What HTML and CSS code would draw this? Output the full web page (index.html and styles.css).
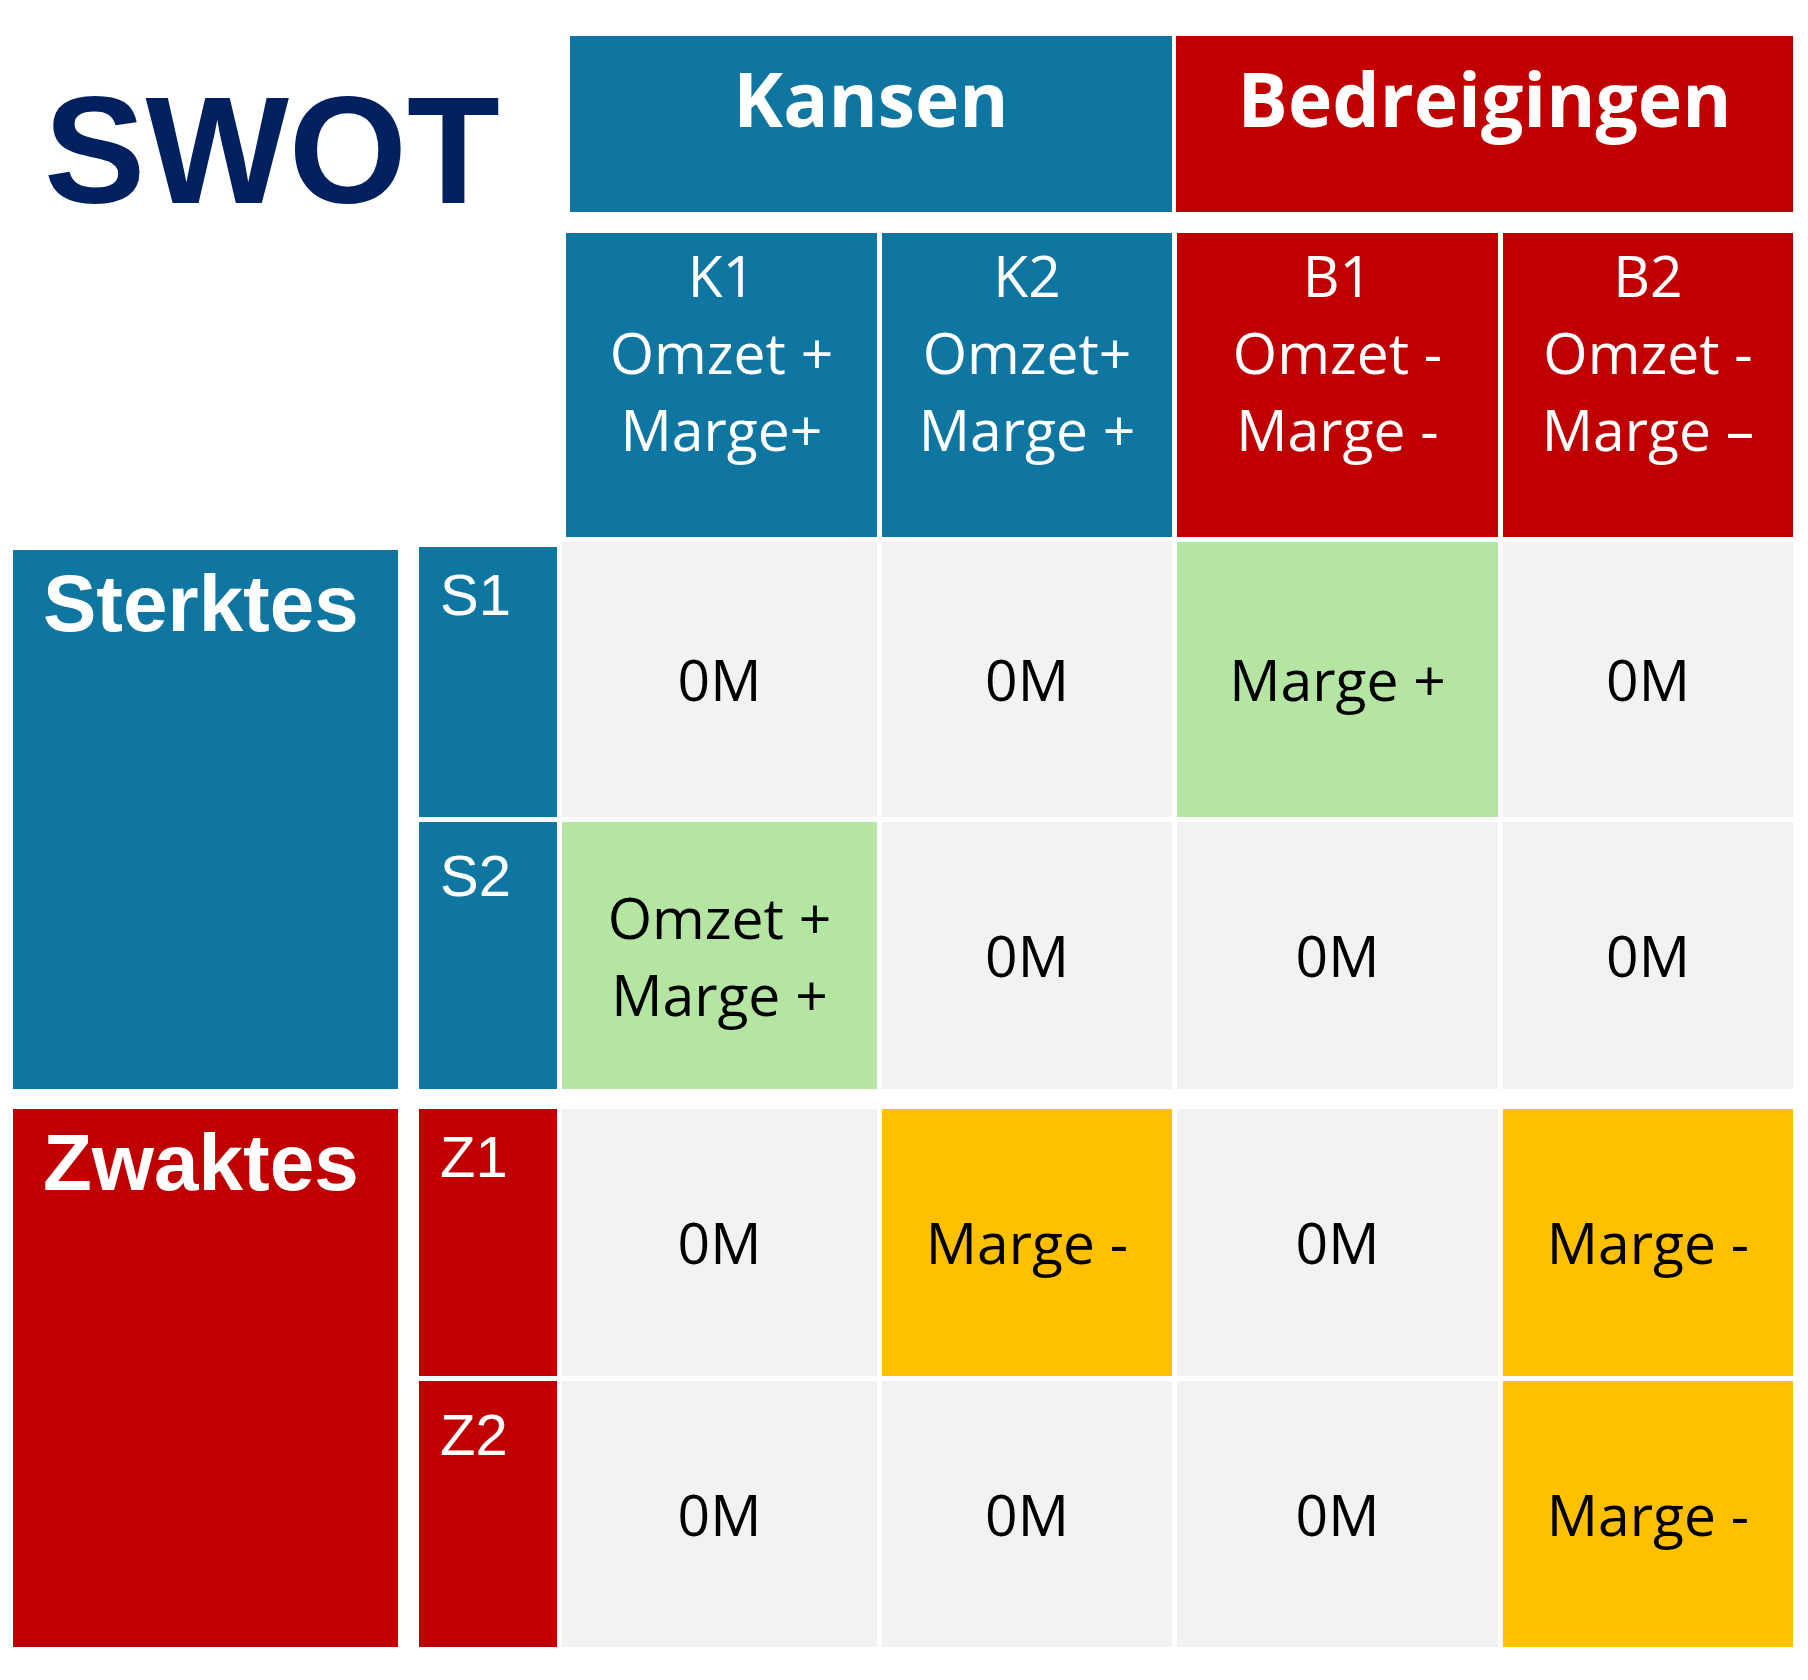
FILE: index.html
```html
<!DOCTYPE html>
<html lang="nl">
<head>
<meta charset="utf-8">
<title>SWOT</title>
<link rel="stylesheet" href="styles.css">
</head>
<body>
<div class="swot">
  <div class="title">SWOT</div>

  <div class="group-head blue head-k">Kansen</div>
  <div class="group-head red head-b">Bedreigingen</div>

  <div class="sub blue sub-k1">K1<br>Omzet +<br>Marge+</div>
  <div class="sub blue sub-k2">K2<br>Omzet+<br>Marge +</div>
  <div class="sub red sub-b1">B1<br>Omzet -<br>Marge -</div>
  <div class="sub red sub-b2">B2<br>Omzet -<br>Marge &ndash;</div>

  <div class="side blue side-s">Sterktes</div>
  <div class="side red side-z">Zwaktes</div>

  <div class="lbl blue lbl-s1">S1</div>
  <div class="lbl blue lbl-s2">S2</div>
  <div class="lbl red lbl-z1">Z1</div>
  <div class="lbl red lbl-z2">Z2</div>

  <div class="cell r-s1 c-k1">0M</div>
  <div class="cell r-s1 c-k2">0M</div>
  <div class="cell green r-s1 c-b1">Marge +</div>
  <div class="cell r-s1 c-b2">0M</div>

  <div class="cell green r-s2 c-k1">Omzet +<br>Marge +</div>
  <div class="cell r-s2 c-k2">0M</div>
  <div class="cell r-s2 c-b1">0M</div>
  <div class="cell r-s2 c-b2">0M</div>

  <div class="cell r-z1 c-k1">0M</div>
  <div class="cell yellow r-z1 c-k2">Marge -</div>
  <div class="cell r-z1 c-b1">0M</div>
  <div class="cell yellow r-z1 c-b2">Marge -</div>

  <div class="cell r-z2 c-k1">0M</div>
  <div class="cell r-z2 c-k2">0M</div>
  <div class="cell r-z2 c-b1">0M</div>
  <div class="cell yellow r-z2 c-b2">Marge -</div>
</div>
</body>
</html>
```

FILE: styles.css
```css
html, body {
  margin: 0;
  padding: 0;
  background: #ffffff;
}

.swot {
  display: grid;
  /* col1 side | gap | label | gap | K1 | gap | K2 | gap | B1 | gap | B2 */
  grid-template-columns: 385px 21px 138px 5px 315px 5px 290px 5px 321px 5px 290px;
  /* head | gap | sub | gap | S1 | gap | S2 | gap | Z1 | gap | Z2 */
  grid-template-rows: 176px 21px 304px 5px 275px 5px 267px 20px 267px 5px 266px;
  padding: 36px 0 0 13px;
  font-family: "Open Sans", "Noto Sans", sans-serif;
}

.blue { background: #0e76a0; color: #ffffff; }
.red { background: #c00000; color: #ffffff; }
.green { background: #b5e5a2; }
.yellow { background: #ffc000; }

.title {
  grid-column: 1 / 4;
  grid-row: 1 / 4;
  font-family: "Liberation Sans", Arial, sans-serif;
  font-weight: 700;
  font-size: 152px;
  line-height: 1;
  color: #002060;
  padding: 38px 0 0 31px;
}

.group-head {
  grid-row: 1;
  font-weight: 700;
  font-size: 75px;
  line-height: 105px;
  text-align: center;
  padding-top: 10px;
}
.head-k { grid-column: 5 / 8; margin-left: 8px; }
.head-b { grid-column: 9 / 12; margin-left: -1px; }

.sub {
  grid-row: 3;
  font-size: 57px;
  line-height: 77px;
  text-align: center;
  padding-top: 4px;
}
.sub-k1 { grid-column: 5; margin-left: 4px; }
.sub-k2 { grid-column: 7; }
.sub-b1 { grid-column: 9; }
.sub-b2 { grid-column: 11; }

.side {
  font-family: "Liberation Sans", Arial, sans-serif;
  font-weight: 700;
  font-size: 80px;
  line-height: 1;
  padding: 14px 0 0 30px;
  grid-column: 1;
}
.side-s { grid-row: 5 / 8; margin-top: 8px; }
.side-z { grid-row: 9 / 12; }

.lbl {
  font-family: "Liberation Sans", Arial, sans-serif;
  font-size: 58px;
  line-height: 1;
  padding: 19px 0 0 21px;
  grid-column: 3;
}
.lbl-s1 { grid-row: 5; margin-top: 5px; }
.lbl-s2 { grid-row: 7; padding-top: 25px; }
.lbl-z1 { grid-row: 9; }
.lbl-z2 { grid-row: 11; padding-top: 25px; }

.cell {
  background-color: #f2f2f2;
  color: #000000;
  font-size: 57px;
  line-height: 77px;
  display: flex;
  align-items: center;
  justify-content: center;
  text-align: center;
}
.cell.green { background-color: #b5e5a2; }
.cell.yellow { background-color: #ffc000; }

.r-s1 { grid-row: 5; }
.r-s2 { grid-row: 7; }
.r-z1 { grid-row: 9; }
.r-z2 { grid-row: 11; }

.c-k1 { grid-column: 5; }
.c-k2 { grid-column: 7; }
.c-b1 { grid-column: 9; }
.c-b2 { grid-column: 11; }
```
